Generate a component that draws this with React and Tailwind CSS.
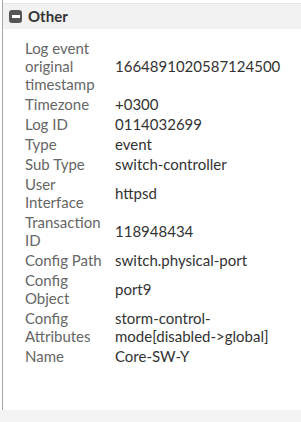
const rows = [
  ['Log event original timestamp', '1664891020587124500'],
  ['Timezone', '+0300'],
  ['Log ID', '0114032699'],
  ['Type', 'event'],
  ['Sub Type', 'switch-controller'],
  ['User Interface', 'httpsd'],
  ['Transaction ID', '118948434'],
  ['Config Path', 'switch.physical-port'],
  ['Config Object', 'port9'],
  ['Config Attributes', 'storm-control-mode[disabled->global]'],
  ['Name', 'Core-SW-Y'],
];

export default function App() {
  return (
    <div className="w-[301px] h-[422px] bg-white flex flex-col font-['Lato',sans-serif] overflow-hidden">
      <div className="flex-1 ml-[2px] border-l border-[#a8a8a8] pt-[3px] flex flex-col">
        {/* Section header */}
        <div className="h-[26px] bg-[#f2f2f2] border-t border-[#e6e6e6] flex items-center pl-[6px] gap-[6px]">
          <span className="w-[13px] h-[13px] rounded-[3px] bg-[#555] flex items-center justify-center">
            <span className="w-[8px] h-[3px] bg-white" />
          </span>
          <span className="text-[15px] font-bold text-[#333]">Other</span>
        </div>

        <table className="mt-[9px] ml-[22px] text-[15px] leading-[18px] border-collapse table-fixed w-[267px]">
          <tbody>
            {rows.map(([k, v]) => (
              <tr key={k}>
                <td className="w-[90px] pr-[6px] py-[1px] align-middle text-[#666]">{k}</td>
                <td className="pr-[8px] py-[1px] align-middle text-[#333] break-words">{v}</td>
              </tr>
            ))}
          </tbody>
        </table>
      </div>
      <div className="h-[12px] bg-[#f4f4f4]" />
    </div>
  );
}
